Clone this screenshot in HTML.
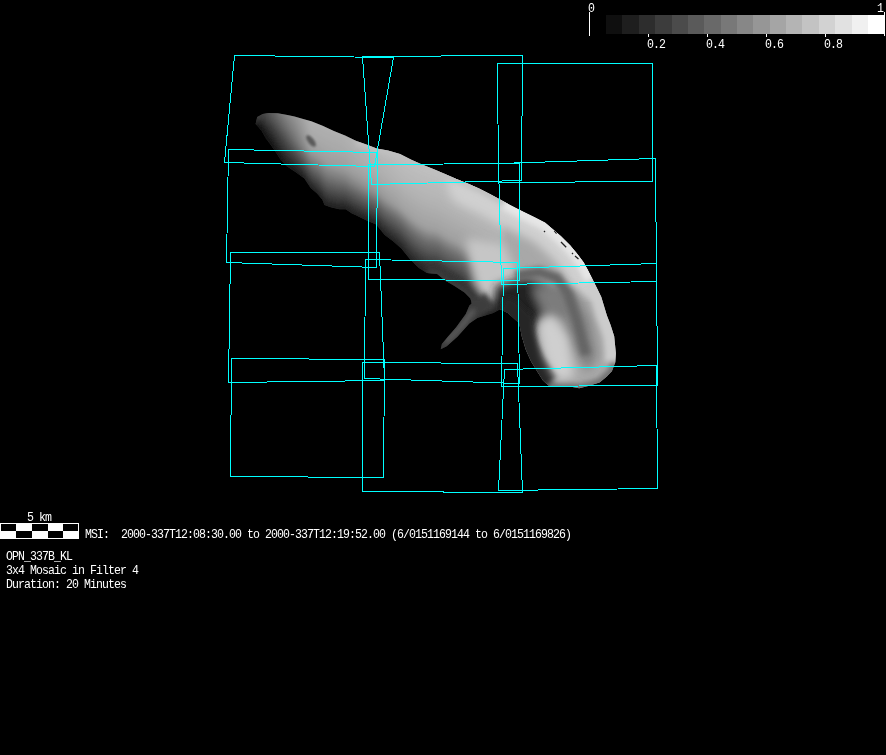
<!DOCTYPE html>
<html><head><meta charset="utf-8">
<style>
html,body{margin:0;padding:0;background:#000;width:886px;height:755px;overflow:hidden}
#root{position:relative;width:886px;height:755px;background:#000}
svg{position:absolute;left:0;top:0}
.t{position:absolute;font-family:"Liberation Mono",monospace;color:#fff;white-space:pre;transform-origin:0 0;line-height:1;font-size:13.6px;letter-spacing:-1.1px;transform:scale(0.85,1)}
</style></head><body><div id="root">
<svg width="886" height="755" viewBox="0 0 886 755">
<g id="bar" shape-rendering="crispEdges">
<rect x="606" y="15" width="16" height="19" fill="rgb(15,15,15)"/>
<rect x="622" y="15" width="17" height="19" fill="rgb(30,30,30)"/>
<rect x="639" y="15" width="16" height="19" fill="rgb(45,45,45)"/>
<rect x="655" y="15" width="17" height="19" fill="rgb(60,60,60)"/>
<rect x="672" y="15" width="16" height="19" fill="rgb(75,75,75)"/>
<rect x="688" y="15" width="16" height="19" fill="rgb(90,90,90)"/>
<rect x="704" y="15" width="17" height="19" fill="rgb(105,105,105)"/>
<rect x="721" y="15" width="16" height="19" fill="rgb(120,120,120)"/>
<rect x="737" y="15" width="16" height="19" fill="rgb(135,135,135)"/>
<rect x="753" y="15" width="17" height="19" fill="rgb(150,150,150)"/>
<rect x="770" y="15" width="16" height="19" fill="rgb(165,165,165)"/>
<rect x="786" y="15" width="16" height="19" fill="rgb(180,180,180)"/>
<rect x="802" y="15" width="17" height="19" fill="rgb(195,195,195)"/>
<rect x="819" y="15" width="16" height="19" fill="rgb(210,210,210)"/>
<rect x="835" y="15" width="17" height="19" fill="rgb(225,225,225)"/>
<rect x="852" y="15" width="16" height="19" fill="rgb(240,240,240)"/>
<rect x="868" y="15" width="16" height="19" fill="rgb(255,255,255)"/>
<rect x="589" y="12" width="1" height="24" fill="#fff"/>
<rect x="884" y="12" width="1" height="24" fill="#fff"/>
<rect x="648" y="34" width="1" height="3" fill="#fff"/>
<rect x="707" y="34" width="1" height="3" fill="#fff"/>
<rect x="766" y="34" width="1" height="3" fill="#fff"/>
<rect x="825" y="34" width="1" height="3" fill="#fff"/>
<rect x="0" y="523" width="79" height="16" fill="#fff"/>
<rect x="1" y="524" width="15" height="7" fill="#000"/>
<rect x="16" y="531" width="16" height="7" fill="#000"/>
<rect x="32" y="524" width="16" height="7" fill="#000"/>
<rect x="48" y="531" width="15" height="7" fill="#000"/>
<rect x="63" y="524" width="15" height="7" fill="#000"/>
</g>
<!--AST--><defs>
<linearGradient id="s248" gradientUnits="userSpaceOnUse" x1="0" y1="114.0" x2="0" y2="130.0"><stop offset="0.00" stop-color="rgb(66,66,66)"/><stop offset="0.25" stop-color="rgb(54,54,54)"/><stop offset="0.50" stop-color="rgb(38,38,38)"/><stop offset="0.75" stop-color="rgb(24,24,24)"/><stop offset="1.00" stop-color="rgb(10,10,10)"/></linearGradient>
<linearGradient id="s252" gradientUnits="userSpaceOnUse" x1="0" y1="114.0" x2="0" y2="130.0"><stop offset="0.00" stop-color="rgb(66,66,66)"/><stop offset="0.25" stop-color="rgb(54,54,54)"/><stop offset="0.50" stop-color="rgb(38,38,38)"/><stop offset="0.75" stop-color="rgb(24,24,24)"/><stop offset="1.00" stop-color="rgb(10,10,10)"/></linearGradient>
<linearGradient id="s256" gradientUnits="userSpaceOnUse" x1="0" y1="116.6" x2="0" y2="126.5"><stop offset="0.00" stop-color="rgb(66,66,66)"/><stop offset="0.25" stop-color="rgb(54,54,54)"/><stop offset="0.50" stop-color="rgb(38,38,38)"/><stop offset="0.75" stop-color="rgb(24,24,24)"/><stop offset="1.00" stop-color="rgb(10,10,10)"/></linearGradient>
<linearGradient id="s260" gradientUnits="userSpaceOnUse" x1="0" y1="114.5" x2="0" y2="131.4"><stop offset="0.00" stop-color="rgb(66,66,66)"/><stop offset="0.25" stop-color="rgb(54,54,54)"/><stop offset="0.50" stop-color="rgb(38,38,38)"/><stop offset="0.75" stop-color="rgb(24,24,24)"/><stop offset="1.00" stop-color="rgb(10,10,10)"/></linearGradient>
<linearGradient id="s264" gradientUnits="userSpaceOnUse" x1="0" y1="113.5" x2="0" y2="138.5"><stop offset="0.00" stop-color="rgb(77,77,77)"/><stop offset="0.25" stop-color="rgb(63,63,63)"/><stop offset="0.50" stop-color="rgb(44,44,44)"/><stop offset="0.75" stop-color="rgb(28,28,28)"/><stop offset="1.00" stop-color="rgb(11,11,11)"/></linearGradient>
<linearGradient id="s268" gradientUnits="userSpaceOnUse" x1="0" y1="113.1" x2="0" y2="143.8"><stop offset="0.00" stop-color="rgb(88,88,88)"/><stop offset="0.25" stop-color="rgb(72,72,72)"/><stop offset="0.50" stop-color="rgb(51,51,51)"/><stop offset="0.75" stop-color="rgb(32,32,32)"/><stop offset="1.00" stop-color="rgb(13,13,13)"/></linearGradient>
<linearGradient id="s272" gradientUnits="userSpaceOnUse" x1="0" y1="113.2" x2="0" y2="149.5"><stop offset="0.00" stop-color="rgb(100,100,100)"/><stop offset="0.25" stop-color="rgb(82,82,82)"/><stop offset="0.50" stop-color="rgb(57,57,57)"/><stop offset="0.75" stop-color="rgb(36,36,36)"/><stop offset="1.00" stop-color="rgb(15,15,15)"/></linearGradient>
<linearGradient id="s276" gradientUnits="userSpaceOnUse" x1="0" y1="113.3" x2="0" y2="155.5"><stop offset="0.00" stop-color="rgb(111,111,111)"/><stop offset="0.25" stop-color="rgb(91,91,91)"/><stop offset="0.50" stop-color="rgb(64,64,64)"/><stop offset="0.75" stop-color="rgb(40,40,40)"/><stop offset="1.00" stop-color="rgb(16,16,16)"/></linearGradient>
<linearGradient id="s280" gradientUnits="userSpaceOnUse" x1="0" y1="114.0" x2="0" y2="161.0"><stop offset="0.00" stop-color="rgb(123,123,123)"/><stop offset="0.25" stop-color="rgb(100,100,100)"/><stop offset="0.50" stop-color="rgb(71,71,71)"/><stop offset="0.75" stop-color="rgb(44,44,44)"/><stop offset="1.00" stop-color="rgb(18,18,18)"/></linearGradient>
<linearGradient id="s284" gradientUnits="userSpaceOnUse" x1="0" y1="114.7" x2="0" y2="165.5"><stop offset="0.00" stop-color="rgb(133,133,133)"/><stop offset="0.25" stop-color="rgb(110,110,110)"/><stop offset="0.45" stop-color="rgb(85,85,85)"/><stop offset="0.50" stop-color="rgb(78,78,78)"/><stop offset="0.58" stop-color="rgb(69,69,69)"/><stop offset="0.70" stop-color="rgb(55,55,55)"/><stop offset="0.75" stop-color="rgb(49,49,49)"/><stop offset="0.80" stop-color="rgb(43,43,43)"/><stop offset="0.90" stop-color="rgb(32,32,32)"/><stop offset="1.00" stop-color="rgb(20,20,20)"/></linearGradient>
<linearGradient id="s288" gradientUnits="userSpaceOnUse" x1="0" y1="115.5" x2="0" y2="168.3"><stop offset="0.00" stop-color="rgb(140,140,140)"/><stop offset="0.25" stop-color="rgb(120,120,120)"/><stop offset="0.45" stop-color="rgb(97,97,97)"/><stop offset="0.50" stop-color="rgb(89,89,89)"/><stop offset="0.58" stop-color="rgb(79,79,79)"/><stop offset="0.70" stop-color="rgb(62,62,62)"/><stop offset="0.75" stop-color="rgb(56,56,56)"/><stop offset="0.80" stop-color="rgb(49,49,49)"/><stop offset="0.90" stop-color="rgb(35,35,35)"/><stop offset="1.00" stop-color="rgb(21,21,21)"/></linearGradient>
<linearGradient id="s292" gradientUnits="userSpaceOnUse" x1="0" y1="116.4" x2="0" y2="170.9"><stop offset="0.00" stop-color="rgb(147,147,147)"/><stop offset="0.25" stop-color="rgb(129,129,129)"/><stop offset="0.45" stop-color="rgb(108,108,108)"/><stop offset="0.50" stop-color="rgb(100,100,100)"/><stop offset="0.58" stop-color="rgb(88,88,88)"/><stop offset="0.70" stop-color="rgb(70,70,70)"/><stop offset="0.75" stop-color="rgb(62,62,62)"/><stop offset="0.80" stop-color="rgb(54,54,54)"/><stop offset="0.90" stop-color="rgb(38,38,38)"/><stop offset="1.00" stop-color="rgb(22,22,22)"/></linearGradient>
<linearGradient id="s296" gradientUnits="userSpaceOnUse" x1="0" y1="117.5" x2="0" y2="173.8"><stop offset="0.00" stop-color="rgb(154,154,154)"/><stop offset="0.25" stop-color="rgb(139,139,139)"/><stop offset="0.45" stop-color="rgb(120,120,120)"/><stop offset="0.50" stop-color="rgb(112,112,112)"/><stop offset="0.58" stop-color="rgb(98,98,98)"/><stop offset="0.70" stop-color="rgb(77,77,77)"/><stop offset="0.75" stop-color="rgb(68,68,68)"/><stop offset="0.80" stop-color="rgb(59,59,59)"/><stop offset="0.90" stop-color="rgb(42,42,42)"/><stop offset="1.00" stop-color="rgb(24,24,24)"/></linearGradient>
<linearGradient id="s300" gradientUnits="userSpaceOnUse" x1="0" y1="118.7" x2="0" y2="176.8"><stop offset="0.00" stop-color="rgb(161,161,161)"/><stop offset="0.25" stop-color="rgb(148,148,148)"/><stop offset="0.45" stop-color="rgb(132,132,132)"/><stop offset="0.50" stop-color="rgb(123,123,123)"/><stop offset="0.58" stop-color="rgb(108,108,108)"/><stop offset="0.70" stop-color="rgb(85,85,85)"/><stop offset="0.75" stop-color="rgb(75,75,75)"/><stop offset="0.80" stop-color="rgb(65,65,65)"/><stop offset="0.90" stop-color="rgb(45,45,45)"/><stop offset="1.00" stop-color="rgb(25,25,25)"/></linearGradient>
<linearGradient id="s304" gradientUnits="userSpaceOnUse" x1="0" y1="119.8" x2="0" y2="181.0"><stop offset="0.00" stop-color="rgb(168,168,168)"/><stop offset="0.25" stop-color="rgb(158,158,158)"/><stop offset="0.45" stop-color="rgb(144,144,144)"/><stop offset="0.50" stop-color="rgb(134,134,134)"/><stop offset="0.58" stop-color="rgb(118,118,118)"/><stop offset="0.70" stop-color="rgb(92,92,92)"/><stop offset="0.75" stop-color="rgb(81,81,81)"/><stop offset="0.80" stop-color="rgb(70,70,70)"/><stop offset="0.90" stop-color="rgb(48,48,48)"/><stop offset="1.00" stop-color="rgb(26,26,26)"/></linearGradient>
<linearGradient id="s308" gradientUnits="userSpaceOnUse" x1="0" y1="120.9" x2="0" y2="187.0"><stop offset="0.00" stop-color="rgb(176,176,176)"/><stop offset="0.25" stop-color="rgb(168,168,168)"/><stop offset="0.45" stop-color="rgb(156,156,156)"/><stop offset="0.58" stop-color="rgb(128,128,128)"/><stop offset="0.70" stop-color="rgb(100,100,100)"/><stop offset="0.80" stop-color="rgb(76,76,76)"/><stop offset="0.90" stop-color="rgb(52,52,52)"/><stop offset="1.00" stop-color="rgb(28,28,28)"/></linearGradient>
<linearGradient id="s312" gradientUnits="userSpaceOnUse" x1="0" y1="122.4" x2="0" y2="190.8"><stop offset="0.00" stop-color="rgb(176,176,176)"/><stop offset="0.25" stop-color="rgb(168,168,168)"/><stop offset="0.45" stop-color="rgb(156,156,156)"/><stop offset="0.58" stop-color="rgb(128,128,128)"/><stop offset="0.70" stop-color="rgb(100,100,100)"/><stop offset="0.80" stop-color="rgb(76,76,76)"/><stop offset="0.90" stop-color="rgb(52,52,52)"/><stop offset="1.00" stop-color="rgb(28,28,28)"/></linearGradient>
<linearGradient id="s316" gradientUnits="userSpaceOnUse" x1="0" y1="124.0" x2="0" y2="194.5"><stop offset="0.00" stop-color="rgb(176,176,176)"/><stop offset="0.25" stop-color="rgb(168,168,168)"/><stop offset="0.45" stop-color="rgb(156,156,156)"/><stop offset="0.58" stop-color="rgb(128,128,128)"/><stop offset="0.70" stop-color="rgb(100,100,100)"/><stop offset="0.80" stop-color="rgb(76,76,76)"/><stop offset="0.90" stop-color="rgb(52,52,52)"/><stop offset="1.00" stop-color="rgb(28,28,28)"/></linearGradient>
<linearGradient id="s320" gradientUnits="userSpaceOnUse" x1="0" y1="125.6" x2="0" y2="199.3"><stop offset="0.00" stop-color="rgb(176,176,176)"/><stop offset="0.25" stop-color="rgb(168,168,168)"/><stop offset="0.45" stop-color="rgb(156,156,156)"/><stop offset="0.58" stop-color="rgb(128,128,128)"/><stop offset="0.70" stop-color="rgb(100,100,100)"/><stop offset="0.80" stop-color="rgb(76,76,76)"/><stop offset="0.90" stop-color="rgb(52,52,52)"/><stop offset="1.00" stop-color="rgb(28,28,28)"/></linearGradient>
<linearGradient id="s324" gradientUnits="userSpaceOnUse" x1="0" y1="127.3" x2="0" y2="205.6"><stop offset="0.00" stop-color="rgb(176,176,176)"/><stop offset="0.25" stop-color="rgb(168,168,168)"/><stop offset="0.45" stop-color="rgb(156,156,156)"/><stop offset="0.58" stop-color="rgb(128,128,128)"/><stop offset="0.70" stop-color="rgb(100,100,100)"/><stop offset="0.80" stop-color="rgb(76,76,76)"/><stop offset="0.90" stop-color="rgb(52,52,52)"/><stop offset="1.00" stop-color="rgb(28,28,28)"/></linearGradient>
<linearGradient id="s328" gradientUnits="userSpaceOnUse" x1="0" y1="129.1" x2="0" y2="206.9"><stop offset="0.00" stop-color="rgb(176,176,176)"/><stop offset="0.25" stop-color="rgb(168,168,168)"/><stop offset="0.45" stop-color="rgb(156,156,156)"/><stop offset="0.58" stop-color="rgb(128,128,128)"/><stop offset="0.70" stop-color="rgb(100,100,100)"/><stop offset="0.80" stop-color="rgb(76,76,76)"/><stop offset="0.90" stop-color="rgb(52,52,52)"/><stop offset="1.00" stop-color="rgb(28,28,28)"/></linearGradient>
<linearGradient id="s332" gradientUnits="userSpaceOnUse" x1="0" y1="130.9" x2="0" y2="208.0"><stop offset="0.00" stop-color="rgb(176,176,176)"/><stop offset="0.25" stop-color="rgb(168,168,168)"/><stop offset="0.45" stop-color="rgb(156,156,156)"/><stop offset="0.58" stop-color="rgb(128,128,128)"/><stop offset="0.70" stop-color="rgb(100,100,100)"/><stop offset="0.80" stop-color="rgb(76,76,76)"/><stop offset="0.90" stop-color="rgb(52,52,52)"/><stop offset="1.00" stop-color="rgb(28,28,28)"/></linearGradient>
<linearGradient id="s336" gradientUnits="userSpaceOnUse" x1="0" y1="132.5" x2="0" y2="209.0"><stop offset="0.00" stop-color="rgb(176,176,176)"/><stop offset="0.25" stop-color="rgb(168,168,168)"/><stop offset="0.45" stop-color="rgb(156,156,156)"/><stop offset="0.58" stop-color="rgb(128,128,128)"/><stop offset="0.70" stop-color="rgb(100,100,100)"/><stop offset="0.80" stop-color="rgb(76,76,76)"/><stop offset="0.90" stop-color="rgb(52,52,52)"/><stop offset="1.00" stop-color="rgb(28,28,28)"/></linearGradient>
<linearGradient id="s340" gradientUnits="userSpaceOnUse" x1="0" y1="134.2" x2="0" y2="209.3"><stop offset="0.00" stop-color="rgb(176,176,176)"/><stop offset="0.25" stop-color="rgb(168,168,168)"/><stop offset="0.30" stop-color="rgb(165,165,165)"/><stop offset="0.45" stop-color="rgb(156,156,156)"/><stop offset="0.58" stop-color="rgb(129,129,129)"/><stop offset="0.70" stop-color="rgb(100,100,100)"/><stop offset="0.80" stop-color="rgb(76,76,76)"/><stop offset="0.90" stop-color="rgb(52,52,52)"/><stop offset="1.00" stop-color="rgb(28,28,28)"/></linearGradient>
<linearGradient id="s344" gradientUnits="userSpaceOnUse" x1="0" y1="135.8" x2="0" y2="209.5"><stop offset="0.00" stop-color="rgb(177,177,177)"/><stop offset="0.25" stop-color="rgb(169,169,169)"/><stop offset="0.30" stop-color="rgb(166,166,166)"/><stop offset="0.45" stop-color="rgb(157,157,157)"/><stop offset="0.58" stop-color="rgb(131,131,131)"/><stop offset="0.70" stop-color="rgb(101,101,101)"/><stop offset="0.80" stop-color="rgb(77,77,77)"/><stop offset="0.90" stop-color="rgb(52,52,52)"/><stop offset="1.00" stop-color="rgb(28,28,28)"/></linearGradient>
<linearGradient id="s348" gradientUnits="userSpaceOnUse" x1="0" y1="137.8" x2="0" y2="212.2"><stop offset="0.00" stop-color="rgb(178,178,178)"/><stop offset="0.25" stop-color="rgb(170,170,170)"/><stop offset="0.30" stop-color="rgb(167,167,167)"/><stop offset="0.45" stop-color="rgb(158,158,158)"/><stop offset="0.58" stop-color="rgb(133,133,133)"/><stop offset="0.70" stop-color="rgb(102,102,102)"/><stop offset="0.80" stop-color="rgb(77,77,77)"/><stop offset="0.90" stop-color="rgb(52,52,52)"/><stop offset="1.00" stop-color="rgb(28,28,28)"/></linearGradient>
<linearGradient id="s352" gradientUnits="userSpaceOnUse" x1="0" y1="139.8" x2="0" y2="214.4"><stop offset="0.00" stop-color="rgb(179,179,179)"/><stop offset="0.25" stop-color="rgb(171,171,171)"/><stop offset="0.30" stop-color="rgb(168,168,168)"/><stop offset="0.45" stop-color="rgb(159,159,159)"/><stop offset="0.58" stop-color="rgb(135,135,135)"/><stop offset="0.70" stop-color="rgb(102,102,102)"/><stop offset="0.80" stop-color="rgb(78,78,78)"/><stop offset="0.90" stop-color="rgb(52,52,52)"/><stop offset="1.00" stop-color="rgb(28,28,28)"/></linearGradient>
<linearGradient id="s356" gradientUnits="userSpaceOnUse" x1="0" y1="141.6" x2="0" y2="216.3"><stop offset="0.00" stop-color="rgb(180,180,180)"/><stop offset="0.25" stop-color="rgb(172,172,172)"/><stop offset="0.30" stop-color="rgb(169,169,169)"/><stop offset="0.45" stop-color="rgb(159,159,159)"/><stop offset="0.58" stop-color="rgb(137,137,137)"/><stop offset="0.70" stop-color="rgb(103,103,103)"/><stop offset="0.80" stop-color="rgb(79,79,79)"/><stop offset="0.90" stop-color="rgb(53,53,53)"/><stop offset="1.00" stop-color="rgb(29,29,29)"/></linearGradient>
<linearGradient id="s360" gradientUnits="userSpaceOnUse" x1="0" y1="143.0" x2="0" y2="218.3"><stop offset="0.00" stop-color="rgb(181,181,181)"/><stop offset="0.25" stop-color="rgb(173,173,173)"/><stop offset="0.30" stop-color="rgb(170,170,170)"/><stop offset="0.45" stop-color="rgb(160,160,160)"/><stop offset="0.58" stop-color="rgb(139,139,139)"/><stop offset="0.70" stop-color="rgb(104,104,104)"/><stop offset="0.80" stop-color="rgb(79,79,79)"/><stop offset="0.90" stop-color="rgb(53,53,53)"/><stop offset="1.00" stop-color="rgb(29,29,29)"/></linearGradient>
<linearGradient id="s364" gradientUnits="userSpaceOnUse" x1="0" y1="144.4" x2="0" y2="220.3"><stop offset="0.00" stop-color="rgb(182,182,182)"/><stop offset="0.25" stop-color="rgb(174,174,174)"/><stop offset="0.30" stop-color="rgb(171,171,171)"/><stop offset="0.45" stop-color="rgb(161,161,161)"/><stop offset="0.58" stop-color="rgb(141,141,141)"/><stop offset="0.70" stop-color="rgb(105,105,105)"/><stop offset="0.80" stop-color="rgb(80,80,80)"/><stop offset="0.90" stop-color="rgb(53,53,53)"/><stop offset="1.00" stop-color="rgb(29,29,29)"/></linearGradient>
<linearGradient id="s368" gradientUnits="userSpaceOnUse" x1="0" y1="145.9" x2="0" y2="221.9"><stop offset="0.00" stop-color="rgb(184,184,184)"/><stop offset="0.25" stop-color="rgb(175,175,175)"/><stop offset="0.30" stop-color="rgb(172,172,172)"/><stop offset="0.45" stop-color="rgb(162,162,162)"/><stop offset="0.58" stop-color="rgb(144,144,144)"/><stop offset="0.70" stop-color="rgb(106,106,106)"/><stop offset="0.80" stop-color="rgb(81,81,81)"/><stop offset="0.90" stop-color="rgb(54,54,54)"/><stop offset="1.00" stop-color="rgb(30,30,30)"/></linearGradient>
<linearGradient id="s372" gradientUnits="userSpaceOnUse" x1="0" y1="147.4" x2="0" y2="223.5"><stop offset="0.00" stop-color="rgb(185,185,185)"/><stop offset="0.25" stop-color="rgb(175,175,175)"/><stop offset="0.30" stop-color="rgb(173,173,173)"/><stop offset="0.45" stop-color="rgb(163,163,163)"/><stop offset="0.58" stop-color="rgb(146,146,146)"/><stop offset="0.70" stop-color="rgb(106,106,106)"/><stop offset="0.80" stop-color="rgb(81,81,81)"/><stop offset="0.90" stop-color="rgb(54,54,54)"/><stop offset="1.00" stop-color="rgb(30,30,30)"/></linearGradient>
<linearGradient id="s376" gradientUnits="userSpaceOnUse" x1="0" y1="148.7" x2="0" y2="226.6"><stop offset="0.00" stop-color="rgb(186,186,186)"/><stop offset="0.25" stop-color="rgb(176,176,176)"/><stop offset="0.30" stop-color="rgb(174,174,174)"/><stop offset="0.45" stop-color="rgb(164,164,164)"/><stop offset="0.58" stop-color="rgb(148,148,148)"/><stop offset="0.70" stop-color="rgb(107,107,107)"/><stop offset="0.80" stop-color="rgb(82,82,82)"/><stop offset="0.90" stop-color="rgb(54,54,54)"/><stop offset="1.00" stop-color="rgb(30,30,30)"/></linearGradient>
<linearGradient id="s380" gradientUnits="userSpaceOnUse" x1="0" y1="149.4" x2="0" y2="231.6"><stop offset="0.00" stop-color="rgb(187,187,187)"/><stop offset="0.25" stop-color="rgb(177,177,177)"/><stop offset="0.30" stop-color="rgb(175,175,175)"/><stop offset="0.45" stop-color="rgb(165,165,165)"/><stop offset="0.58" stop-color="rgb(150,150,150)"/><stop offset="0.70" stop-color="rgb(108,108,108)"/><stop offset="0.80" stop-color="rgb(83,83,83)"/><stop offset="0.90" stop-color="rgb(54,54,54)"/><stop offset="1.00" stop-color="rgb(30,30,30)"/></linearGradient>
<linearGradient id="s384" gradientUnits="userSpaceOnUse" x1="0" y1="150.2" x2="0" y2="236.0"><stop offset="0.00" stop-color="rgb(188,188,188)"/><stop offset="0.25" stop-color="rgb(178,178,178)"/><stop offset="0.30" stop-color="rgb(176,176,176)"/><stop offset="0.45" stop-color="rgb(166,166,166)"/><stop offset="0.58" stop-color="rgb(152,152,152)"/><stop offset="0.70" stop-color="rgb(109,109,109)"/><stop offset="0.80" stop-color="rgb(83,83,83)"/><stop offset="0.90" stop-color="rgb(55,55,55)"/><stop offset="1.00" stop-color="rgb(31,31,31)"/></linearGradient>
<linearGradient id="s388" gradientUnits="userSpaceOnUse" x1="0" y1="151.2" x2="0" y2="239.0"><stop offset="0.00" stop-color="rgb(189,189,189)"/><stop offset="0.25" stop-color="rgb(179,179,179)"/><stop offset="0.30" stop-color="rgb(177,177,177)"/><stop offset="0.45" stop-color="rgb(167,167,167)"/><stop offset="0.58" stop-color="rgb(154,154,154)"/><stop offset="0.70" stop-color="rgb(110,110,110)"/><stop offset="0.80" stop-color="rgb(84,84,84)"/><stop offset="0.90" stop-color="rgb(55,55,55)"/><stop offset="1.00" stop-color="rgb(31,31,31)"/></linearGradient>
<linearGradient id="s392" gradientUnits="userSpaceOnUse" x1="0" y1="152.3" x2="0" y2="242.1"><stop offset="0.00" stop-color="rgb(190,190,190)"/><stop offset="0.25" stop-color="rgb(180,180,180)"/><stop offset="0.30" stop-color="rgb(178,178,178)"/><stop offset="0.45" stop-color="rgb(167,167,167)"/><stop offset="0.58" stop-color="rgb(156,156,156)"/><stop offset="0.70" stop-color="rgb(110,110,110)"/><stop offset="0.80" stop-color="rgb(85,85,85)"/><stop offset="0.90" stop-color="rgb(55,55,55)"/><stop offset="1.00" stop-color="rgb(31,31,31)"/></linearGradient>
<linearGradient id="s396" gradientUnits="userSpaceOnUse" x1="0" y1="153.5" x2="0" y2="245.6"><stop offset="0.00" stop-color="rgb(191,191,191)"/><stop offset="0.25" stop-color="rgb(181,181,181)"/><stop offset="0.30" stop-color="rgb(179,179,179)"/><stop offset="0.45" stop-color="rgb(168,168,168)"/><stop offset="0.58" stop-color="rgb(158,158,158)"/><stop offset="0.70" stop-color="rgb(111,111,111)"/><stop offset="0.80" stop-color="rgb(85,85,85)"/><stop offset="0.90" stop-color="rgb(55,55,55)"/><stop offset="1.00" stop-color="rgb(31,31,31)"/></linearGradient>
<linearGradient id="s400" gradientUnits="userSpaceOnUse" x1="0" y1="155.1" x2="0" y2="249.2"><stop offset="0.00" stop-color="rgb(192,192,192)"/><stop offset="0.30" stop-color="rgb(180,180,180)"/><stop offset="0.58" stop-color="rgb(160,160,160)"/><stop offset="0.70" stop-color="rgb(112,112,112)"/><stop offset="0.80" stop-color="rgb(86,86,86)"/><stop offset="0.90" stop-color="rgb(56,56,56)"/><stop offset="1.00" stop-color="rgb(32,32,32)"/></linearGradient>
<linearGradient id="s404" gradientUnits="userSpaceOnUse" x1="0" y1="157.1" x2="0" y2="254.2"><stop offset="0.00" stop-color="rgb(192,192,192)"/><stop offset="0.30" stop-color="rgb(180,180,180)"/><stop offset="0.58" stop-color="rgb(160,160,160)"/><stop offset="0.70" stop-color="rgb(112,112,112)"/><stop offset="0.80" stop-color="rgb(86,86,86)"/><stop offset="0.90" stop-color="rgb(56,56,56)"/><stop offset="1.00" stop-color="rgb(32,32,32)"/></linearGradient>
<linearGradient id="s408" gradientUnits="userSpaceOnUse" x1="0" y1="159.1" x2="0" y2="259.2"><stop offset="0.00" stop-color="rgb(192,192,192)"/><stop offset="0.30" stop-color="rgb(180,180,180)"/><stop offset="0.58" stop-color="rgb(160,160,160)"/><stop offset="0.70" stop-color="rgb(112,112,112)"/><stop offset="0.80" stop-color="rgb(86,86,86)"/><stop offset="0.90" stop-color="rgb(56,56,56)"/><stop offset="1.00" stop-color="rgb(32,32,32)"/></linearGradient>
<linearGradient id="s412" gradientUnits="userSpaceOnUse" x1="0" y1="161.0" x2="0" y2="263.2"><stop offset="0.00" stop-color="rgb(192,192,192)"/><stop offset="0.30" stop-color="rgb(180,180,180)"/><stop offset="0.58" stop-color="rgb(160,160,160)"/><stop offset="0.70" stop-color="rgb(112,112,112)"/><stop offset="0.80" stop-color="rgb(86,86,86)"/><stop offset="0.90" stop-color="rgb(56,56,56)"/><stop offset="1.00" stop-color="rgb(32,32,32)"/></linearGradient>
<linearGradient id="s416" gradientUnits="userSpaceOnUse" x1="0" y1="162.8" x2="0" y2="267.2"><stop offset="0.00" stop-color="rgb(192,192,192)"/><stop offset="0.30" stop-color="rgb(180,180,180)"/><stop offset="0.58" stop-color="rgb(160,160,160)"/><stop offset="0.70" stop-color="rgb(112,112,112)"/><stop offset="0.80" stop-color="rgb(86,86,86)"/><stop offset="0.90" stop-color="rgb(56,56,56)"/><stop offset="1.00" stop-color="rgb(32,32,32)"/></linearGradient>
<linearGradient id="s420" gradientUnits="userSpaceOnUse" x1="0" y1="164.5" x2="0" y2="269.9"><stop offset="0.00" stop-color="rgb(192,192,192)"/><stop offset="0.30" stop-color="rgb(180,180,180)"/><stop offset="0.58" stop-color="rgb(160,160,160)"/><stop offset="0.70" stop-color="rgb(112,112,112)"/><stop offset="0.80" stop-color="rgb(86,86,86)"/><stop offset="0.90" stop-color="rgb(56,56,56)"/><stop offset="1.00" stop-color="rgb(32,32,32)"/></linearGradient>
<linearGradient id="s424" gradientUnits="userSpaceOnUse" x1="0" y1="166.2" x2="0" y2="272.5"><stop offset="0.00" stop-color="rgb(192,192,192)"/><stop offset="0.30" stop-color="rgb(180,180,180)"/><stop offset="0.58" stop-color="rgb(160,160,160)"/><stop offset="0.70" stop-color="rgb(112,112,112)"/><stop offset="0.80" stop-color="rgb(86,86,86)"/><stop offset="0.90" stop-color="rgb(56,56,56)"/><stop offset="1.00" stop-color="rgb(32,32,32)"/></linearGradient>
<linearGradient id="s428" gradientUnits="userSpaceOnUse" x1="0" y1="167.7" x2="0" y2="273.4"><stop offset="0.00" stop-color="rgb(192,192,192)"/><stop offset="0.30" stop-color="rgb(180,180,180)"/><stop offset="0.58" stop-color="rgb(160,160,160)"/><stop offset="0.70" stop-color="rgb(112,112,112)"/><stop offset="0.80" stop-color="rgb(86,86,86)"/><stop offset="0.90" stop-color="rgb(56,56,56)"/><stop offset="1.00" stop-color="rgb(32,32,32)"/></linearGradient>
<linearGradient id="s432" gradientUnits="userSpaceOnUse" x1="0" y1="169.3" x2="0" y2="273.7"><stop offset="0.00" stop-color="rgb(192,192,192)"/><stop offset="0.30" stop-color="rgb(180,180,180)"/><stop offset="0.58" stop-color="rgb(160,160,160)"/><stop offset="0.70" stop-color="rgb(112,112,112)"/><stop offset="0.80" stop-color="rgb(86,86,86)"/><stop offset="0.90" stop-color="rgb(56,56,56)"/><stop offset="1.00" stop-color="rgb(32,32,32)"/></linearGradient>
<linearGradient id="s436" gradientUnits="userSpaceOnUse" x1="0" y1="171.0" x2="0" y2="274.6"><stop offset="0.00" stop-color="rgb(192,192,192)"/><stop offset="0.30" stop-color="rgb(180,180,180)"/><stop offset="0.58" stop-color="rgb(160,160,160)"/><stop offset="0.70" stop-color="rgb(112,112,112)"/><stop offset="0.80" stop-color="rgb(86,86,86)"/><stop offset="0.90" stop-color="rgb(56,56,56)"/><stop offset="1.00" stop-color="rgb(32,32,32)"/></linearGradient>
<linearGradient id="s440" gradientUnits="userSpaceOnUse" x1="0" y1="172.6" x2="0" y2="277.9"><stop offset="0.00" stop-color="rgb(192,192,192)"/><stop offset="0.30" stop-color="rgb(180,180,180)"/><stop offset="0.58" stop-color="rgb(160,160,160)"/><stop offset="0.70" stop-color="rgb(112,112,112)"/><stop offset="0.80" stop-color="rgb(86,86,86)"/><stop offset="0.90" stop-color="rgb(56,56,56)"/><stop offset="1.00" stop-color="rgb(32,32,32)"/></linearGradient>
<linearGradient id="s444" gradientUnits="userSpaceOnUse" x1="0" y1="174.3" x2="0" y2="281.0"><stop offset="0.00" stop-color="rgb(192,192,192)"/><stop offset="0.30" stop-color="rgb(180,180,180)"/><stop offset="0.58" stop-color="rgb(160,160,160)"/><stop offset="0.70" stop-color="rgb(112,112,112)"/><stop offset="0.80" stop-color="rgb(86,86,86)"/><stop offset="0.90" stop-color="rgb(56,56,56)"/><stop offset="1.00" stop-color="rgb(32,32,32)"/></linearGradient>
<linearGradient id="s448" gradientUnits="userSpaceOnUse" x1="0" y1="176.1" x2="0" y2="283.3"><stop offset="0.00" stop-color="rgb(192,192,192)"/><stop offset="0.30" stop-color="rgb(180,180,180)"/><stop offset="0.58" stop-color="rgb(160,160,160)"/><stop offset="0.70" stop-color="rgb(112,112,112)"/><stop offset="0.80" stop-color="rgb(86,86,86)"/><stop offset="0.90" stop-color="rgb(56,56,56)"/><stop offset="1.00" stop-color="rgb(32,32,32)"/></linearGradient>
<linearGradient id="s452" gradientUnits="userSpaceOnUse" x1="0" y1="177.8" x2="0" y2="285.6"><stop offset="0.00" stop-color="rgb(192,192,192)"/><stop offset="0.30" stop-color="rgb(180,180,180)"/><stop offset="0.58" stop-color="rgb(160,160,160)"/><stop offset="0.70" stop-color="rgb(112,112,112)"/><stop offset="0.80" stop-color="rgb(86,86,86)"/><stop offset="0.90" stop-color="rgb(56,56,56)"/><stop offset="1.00" stop-color="rgb(32,32,32)"/></linearGradient>
<linearGradient id="s456" gradientUnits="userSpaceOnUse" x1="0" y1="179.6" x2="0" y2="288.3"><stop offset="0.00" stop-color="rgb(192,192,192)"/><stop offset="0.30" stop-color="rgb(180,180,180)"/><stop offset="0.58" stop-color="rgb(160,160,160)"/><stop offset="0.70" stop-color="rgb(112,112,112)"/><stop offset="0.80" stop-color="rgb(86,86,86)"/><stop offset="0.90" stop-color="rgb(56,56,56)"/><stop offset="1.00" stop-color="rgb(32,32,32)"/></linearGradient>
<linearGradient id="s460" gradientUnits="userSpaceOnUse" x1="0" y1="181.2" x2="0" y2="290.9"><stop offset="0.00" stop-color="rgb(192,192,192)"/><stop offset="0.30" stop-color="rgb(180,180,180)"/><stop offset="0.58" stop-color="rgb(160,160,160)"/><stop offset="0.70" stop-color="rgb(112,112,112)"/><stop offset="0.80" stop-color="rgb(86,86,86)"/><stop offset="0.90" stop-color="rgb(56,56,56)"/><stop offset="1.00" stop-color="rgb(32,32,32)"/></linearGradient>
<linearGradient id="s464" gradientUnits="userSpaceOnUse" x1="0" y1="182.8" x2="0" y2="294.0"><stop offset="0.00" stop-color="rgb(192,192,192)"/><stop offset="0.30" stop-color="rgb(180,180,180)"/><stop offset="0.58" stop-color="rgb(160,160,160)"/><stop offset="0.70" stop-color="rgb(112,112,112)"/><stop offset="0.80" stop-color="rgb(86,86,86)"/><stop offset="0.90" stop-color="rgb(56,56,56)"/><stop offset="1.00" stop-color="rgb(32,32,32)"/></linearGradient>
<linearGradient id="s468" gradientUnits="userSpaceOnUse" x1="0" y1="184.5" x2="0" y2="298.1"><stop offset="0.00" stop-color="rgb(192,192,192)"/><stop offset="0.30" stop-color="rgb(180,180,180)"/><stop offset="0.58" stop-color="rgb(160,160,160)"/><stop offset="0.70" stop-color="rgb(112,112,112)"/><stop offset="0.80" stop-color="rgb(86,86,86)"/><stop offset="0.90" stop-color="rgb(56,56,56)"/><stop offset="1.00" stop-color="rgb(32,32,32)"/></linearGradient>
<linearGradient id="s472" gradientUnits="userSpaceOnUse" x1="0" y1="186.3" x2="0" y2="304.8"><stop offset="0.00" stop-color="rgb(192,192,192)"/><stop offset="0.30" stop-color="rgb(180,180,180)"/><stop offset="0.58" stop-color="rgb(160,160,160)"/><stop offset="0.70" stop-color="rgb(112,112,112)"/><stop offset="0.80" stop-color="rgb(86,86,86)"/><stop offset="0.90" stop-color="rgb(56,56,56)"/><stop offset="1.00" stop-color="rgb(32,32,32)"/></linearGradient>
<linearGradient id="s476" gradientUnits="userSpaceOnUse" x1="0" y1="188.1" x2="0" y2="307.2"><stop offset="0.00" stop-color="rgb(192,192,192)"/><stop offset="0.30" stop-color="rgb(180,180,180)"/><stop offset="0.58" stop-color="rgb(160,160,160)"/><stop offset="0.70" stop-color="rgb(112,112,112)"/><stop offset="0.80" stop-color="rgb(86,86,86)"/><stop offset="0.90" stop-color="rgb(56,56,56)"/><stop offset="1.00" stop-color="rgb(32,32,32)"/></linearGradient>
<linearGradient id="s480" gradientUnits="userSpaceOnUse" x1="0" y1="190.0" x2="0" y2="309.6"><stop offset="0.00" stop-color="rgb(192,192,192)"/><stop offset="0.30" stop-color="rgb(180,180,180)"/><stop offset="0.58" stop-color="rgb(160,160,160)"/><stop offset="0.70" stop-color="rgb(112,112,112)"/><stop offset="0.80" stop-color="rgb(86,86,86)"/><stop offset="0.90" stop-color="rgb(56,56,56)"/><stop offset="1.00" stop-color="rgb(32,32,32)"/></linearGradient>
<linearGradient id="s484" gradientUnits="userSpaceOnUse" x1="0" y1="192.0" x2="0" y2="312.0"><stop offset="0.00" stop-color="rgb(192,192,192)"/><stop offset="0.30" stop-color="rgb(180,180,180)"/><stop offset="0.58" stop-color="rgb(160,160,160)"/><stop offset="0.70" stop-color="rgb(112,112,112)"/><stop offset="0.80" stop-color="rgb(86,86,86)"/><stop offset="0.90" stop-color="rgb(56,56,56)"/><stop offset="1.00" stop-color="rgb(32,32,32)"/></linearGradient>
<linearGradient id="s488" gradientUnits="userSpaceOnUse" x1="0" y1="194.0" x2="0" y2="312.6"><stop offset="0.00" stop-color="rgb(192,192,192)"/><stop offset="0.30" stop-color="rgb(180,180,180)"/><stop offset="0.58" stop-color="rgb(160,160,160)"/><stop offset="0.70" stop-color="rgb(112,112,112)"/><stop offset="0.80" stop-color="rgb(86,86,86)"/><stop offset="0.90" stop-color="rgb(56,56,56)"/><stop offset="1.00" stop-color="rgb(32,32,32)"/></linearGradient>
<linearGradient id="s492" gradientUnits="userSpaceOnUse" x1="0" y1="196.3" x2="0" y2="313.1"><stop offset="0.00" stop-color="rgb(192,192,192)"/><stop offset="0.30" stop-color="rgb(180,180,180)"/><stop offset="0.58" stop-color="rgb(160,160,160)"/><stop offset="0.70" stop-color="rgb(112,112,112)"/><stop offset="0.80" stop-color="rgb(86,86,86)"/><stop offset="0.90" stop-color="rgb(56,56,56)"/><stop offset="1.00" stop-color="rgb(32,32,32)"/></linearGradient>
<linearGradient id="s496" gradientUnits="userSpaceOnUse" x1="0" y1="198.5" x2="0" y2="313.7"><stop offset="0.00" stop-color="rgb(192,192,192)"/><stop offset="0.30" stop-color="rgb(180,180,180)"/><stop offset="0.58" stop-color="rgb(160,160,160)"/><stop offset="0.70" stop-color="rgb(112,112,112)"/><stop offset="0.80" stop-color="rgb(86,86,86)"/><stop offset="0.90" stop-color="rgb(56,56,56)"/><stop offset="1.00" stop-color="rgb(32,32,32)"/></linearGradient>
<linearGradient id="s500" gradientUnits="userSpaceOnUse" x1="0" y1="200.7" x2="0" y2="314.0"><stop offset="0.00" stop-color="rgb(192,192,192)"/><stop offset="0.30" stop-color="rgb(180,180,180)"/><stop offset="0.58" stop-color="rgb(160,160,160)"/><stop offset="0.70" stop-color="rgb(112,112,112)"/><stop offset="0.80" stop-color="rgb(86,86,86)"/><stop offset="0.90" stop-color="rgb(56,56,56)"/><stop offset="1.00" stop-color="rgb(32,32,32)"/></linearGradient>
<clipPath id="sil"><polygon points="255.6,124.0 257.2,117.0 262.7,114.1 268.3,113.0 277.8,113.3 287.4,114.9 294.5,116.5 304.0,119.3 311.3,121.3 322.6,125.8 333.9,130.9 345.1,135.4 356.4,141.0 367.7,145.0 376.7,148.4 388.0,150.6 400.0,154.1 411.3,159.8 422.6,164.8 433.9,169.3 445.1,173.9 456.4,178.9 467.7,183.5 479.0,188.5 490.3,194.2 500.0,199.6 511.3,205.8 522.6,211.4 533.9,217.1 545.1,222.7 551.9,228.4 560.9,236.3 570.0,245.3 576.7,253.2 583.5,262.2 587.4,269.3 592.1,278.5 596.7,287.8 601.3,297.1 604.1,306.3 606.9,315.6 610.6,324.9 614.2,336.3 615.9,353.2 615.3,362.2 611.9,371.3 606.3,376.9 599.5,382.6 588.2,386.0 579.2,388.2 572.4,387.0 558.9,386.5 548.4,385.5 543.0,380.5 537.7,372.2 531.1,361.6 525.8,349.7 521.8,336.4 519.2,323.2 508.0,313.0 500.0,309.3 493.2,312.9 486.0,315.3 477.7,317.7 469.3,323.6 457.4,336.7 446.7,346.3 440.7,349.3 441.9,343.9 447.9,336.7 456.2,327.2 465.8,314.1 469.3,305.8 471.7,303.4 470.5,298.6 464.6,292.6 453.8,285.5 445.5,280.7 437.2,274.0 427.0,273.1 418.6,267.8 410.1,259.3 401.6,248.7 393.1,241.3 384.7,235.0 376.2,224.4 365.6,220.1 355.0,214.8 352.0,213.6 345.7,209.3 339.3,209.3 330.8,207.2 324.5,205.1 322.4,199.8 317.1,193.4 310.7,188.1 304.4,178.6 295.9,172.2 286.4,165.9 280.2,159.0 276.2,152.7 270.7,144.7 265.9,138.4 261.9,131.2 258.0,126.5"/></clipPath>
<filter id="bl" x="-20%" y="-20%" width="140%" height="140%"><feGaussianBlur stdDeviation="2.5"/></filter>
<filter id="bl1" x="-50%" y="-50%" width="200%" height="200%"><feGaussianBlur stdDeviation="1.2"/></filter>
<filter id="bl5" x="-30%" y="-30%" width="160%" height="160%"><feGaussianBlur stdDeviation="5"/></filter>
<filter id="bl8" x="-50%" y="-50%" width="200%" height="200%"><feGaussianBlur stdDeviation="9"/></filter>
</defs>
<g clip-path="url(#sil)">
<rect x="240" y="100" width="260" height="300" fill="#303030"/>
<rect x="500" y="100" width="130" height="300" fill="#a8a8a8"/>
<g filter="url(#bl)">
<rect x="248" y="102.0" width="4.5" height="40.0" fill="url(#s248)"/>
<rect x="252" y="102.0" width="4.5" height="40.0" fill="url(#s252)"/>
<rect x="256" y="104.6" width="4.5" height="33.9" fill="url(#s256)"/>
<rect x="260" y="102.5" width="4.5" height="40.9" fill="url(#s260)"/>
<rect x="264" y="101.5" width="4.5" height="49.1" fill="url(#s264)"/>
<rect x="268" y="101.1" width="4.5" height="54.7" fill="url(#s268)"/>
<rect x="272" y="101.2" width="4.5" height="60.3" fill="url(#s272)"/>
<rect x="276" y="101.3" width="4.5" height="66.2" fill="url(#s276)"/>
<rect x="280" y="102.0" width="4.5" height="71.0" fill="url(#s280)"/>
<rect x="284" y="102.7" width="4.5" height="74.8" fill="url(#s284)"/>
<rect x="288" y="103.5" width="4.5" height="76.8" fill="url(#s288)"/>
<rect x="292" y="104.4" width="4.5" height="78.6" fill="url(#s292)"/>
<rect x="296" y="105.5" width="4.5" height="80.2" fill="url(#s296)"/>
<rect x="300" y="106.7" width="4.5" height="82.1" fill="url(#s300)"/>
<rect x="304" y="107.8" width="4.5" height="85.2" fill="url(#s304)"/>
<rect x="308" y="108.9" width="4.5" height="90.1" fill="url(#s308)"/>
<rect x="312" y="110.4" width="4.5" height="92.5" fill="url(#s312)"/>
<rect x="316" y="112.0" width="4.5" height="94.5" fill="url(#s316)"/>
<rect x="320" y="113.6" width="4.5" height="97.8" fill="url(#s320)"/>
<rect x="324" y="115.3" width="4.5" height="102.3" fill="url(#s324)"/>
<rect x="328" y="117.1" width="4.5" height="101.8" fill="url(#s328)"/>
<rect x="332" y="118.9" width="4.5" height="101.1" fill="url(#s332)"/>
<rect x="336" y="120.5" width="4.5" height="100.4" fill="url(#s336)"/>
<rect x="340" y="122.2" width="4.5" height="99.1" fill="url(#s340)"/>
<rect x="344" y="123.8" width="4.5" height="97.7" fill="url(#s344)"/>
<rect x="348" y="125.8" width="4.5" height="98.4" fill="url(#s348)"/>
<rect x="352" y="127.8" width="4.5" height="98.6" fill="url(#s352)"/>
<rect x="356" y="129.6" width="4.5" height="98.7" fill="url(#s356)"/>
<rect x="360" y="131.0" width="4.5" height="99.3" fill="url(#s360)"/>
<rect x="364" y="132.4" width="4.5" height="99.9" fill="url(#s364)"/>
<rect x="368" y="133.9" width="4.5" height="100.0" fill="url(#s368)"/>
<rect x="372" y="135.4" width="4.5" height="100.1" fill="url(#s372)"/>
<rect x="376" y="136.7" width="4.5" height="102.0" fill="url(#s376)"/>
<rect x="380" y="137.4" width="4.5" height="106.2" fill="url(#s380)"/>
<rect x="384" y="138.2" width="4.5" height="109.8" fill="url(#s384)"/>
<rect x="388" y="139.2" width="4.5" height="111.8" fill="url(#s388)"/>
<rect x="392" y="140.3" width="4.5" height="113.7" fill="url(#s392)"/>
<rect x="396" y="141.5" width="4.5" height="116.0" fill="url(#s396)"/>
<rect x="400" y="143.1" width="4.5" height="118.1" fill="url(#s400)"/>
<rect x="404" y="145.1" width="4.5" height="121.1" fill="url(#s404)"/>
<rect x="408" y="147.1" width="4.5" height="124.0" fill="url(#s408)"/>
<rect x="412" y="149.0" width="4.5" height="126.2" fill="url(#s412)"/>
<rect x="416" y="150.8" width="4.5" height="128.4" fill="url(#s416)"/>
<rect x="420" y="152.5" width="4.5" height="129.4" fill="url(#s420)"/>
<rect x="424" y="154.2" width="4.5" height="130.3" fill="url(#s424)"/>
<rect x="428" y="155.7" width="4.5" height="129.6" fill="url(#s428)"/>
<rect x="432" y="157.3" width="4.5" height="128.4" fill="url(#s432)"/>
<rect x="436" y="159.0" width="4.5" height="127.7" fill="url(#s436)"/>
<rect x="440" y="160.6" width="4.5" height="129.2" fill="url(#s440)"/>
<rect x="444" y="162.3" width="4.5" height="130.7" fill="url(#s444)"/>
<rect x="448" y="164.1" width="4.5" height="131.2" fill="url(#s448)"/>
<rect x="452" y="165.8" width="4.5" height="131.8" fill="url(#s452)"/>
<rect x="456" y="167.6" width="4.5" height="132.7" fill="url(#s456)"/>
<rect x="460" y="169.2" width="4.5" height="133.7" fill="url(#s460)"/>
<rect x="464" y="170.8" width="4.5" height="135.2" fill="url(#s464)"/>
<rect x="468" y="172.5" width="4.5" height="137.6" fill="url(#s468)"/>
<rect x="472" y="174.3" width="4.5" height="142.5" fill="url(#s472)"/>
<rect x="476" y="176.1" width="4.5" height="143.1" fill="url(#s476)"/>
<rect x="480" y="178.0" width="4.5" height="143.6" fill="url(#s480)"/>
<rect x="484" y="180.0" width="4.5" height="144.0" fill="url(#s484)"/>
<rect x="488" y="182.0" width="4.5" height="142.5" fill="url(#s488)"/>
<rect x="492" y="184.3" width="4.5" height="140.9" fill="url(#s492)"/>
<rect x="496" y="186.5" width="4.5" height="139.2" fill="url(#s496)"/>
<rect x="500" y="188.7" width="4.5" height="137.3" fill="url(#s500)"/>
</g>
<g filter="url(#bl5)">
<polyline points="470,185 490,194.2 500,199.6 511.3,205.8 522.6,211.4 533.9,217.1 545.1,222.7 551.9,228.4 560.9,236.3 570,245.3 576.7,253.2 583.5,262.2 590,275" fill="none" stroke="#d0d0d0" stroke-width="44" stroke-linecap="round"/>
</g>
<g filter="url(#bl5)">
<polygon points="466,238 504,244 516,272 506,298 486,304 474,282" fill="#c6c6c6"/>
</g>
<g filter="url(#bl5)">
<polygon points="496,286 524,278 550,284 556,302 540,318 530,340 516,330 494,312" fill="#222222"/>
<polygon points="557,287 575,290 590,320 597,355 588,372 570,345 560,310" fill="#808080"/>
<polygon points="532,288 560,284 574,298 568,318 546,320" fill="#7c7c7c"/>
</g>
<g filter="url(#bl)">
<polyline points="427,273.1 437.2,274 445.5,280.7 453.8,285.5 464.6,292.6 470.5,298.6 471.7,303.4" fill="none" stroke="#3a3a3a" stroke-width="12"/>

<polyline points="356.4,141.0 367.7,145.0 376.7,148.4 388.0,150.6 400.0,154.1 411.3,159.8 422.6,164.8 433.9,169.3 445.1,173.9 456.4,178.9 467.7,183.5 479.0,188.5 490.3,194.2 500.0,199.6 511.3,205.8 522.6,211.4 533.9,217.1 545.1,222.7 551.9,228.4 560.9,236.3 570.0,245.3 576.7,253.2 583.5,262.2" fill="none" stroke="#c0c0c0" stroke-width="8"/>
<polyline points="516,276 539,272 557,278 568,294 577,321 586,355" fill="none" stroke="#656565" stroke-width="10"/>
<polyline points="583.5,262.2 587.4,269.3 592.1,278.5 596.7,287.8 601.3,297.1 604.1,306.3 606.9,315.6 610.6,324.9 614.2,336.3 615.9,353.2 615.3,362.2" fill="none" stroke="#cccccc" stroke-width="22"/>
<polyline points="615.3,362.2 611.9,371.3 606.3,376.9 599.5,382.6 588.2,386.0 579.2,388.2 572.4,387.0 558.9,386.5 548.4,385.5" fill="none" stroke="#707070" stroke-width="8"/>
<polyline points="548.4,385.5 543.0,380.5 537.7,372.2 531.1,361.6 525.8,349.7 521.8,336.4 519.2,323.2 508.0,313.0 500.0,309.3" fill="none" stroke="#262626" stroke-width="30"/>
<polyline points="440,349 457,332 472,312 490,300" fill="none" stroke="#3e3e3e" stroke-width="18"/>
<polyline points="446,342 460,328 474,310" fill="none" stroke="#686868" stroke-width="3"/>

</g>
<ellipse cx="311" cy="141" rx="3" ry="7" fill="#5a5a5a" transform="rotate(-38 311 141)" filter="url(#bl1)"/>
<polyline points="505,202 522.6,211.4 533.9,217.1 545.1,222.7 551.9,228.4 560.9,236.3 570,245.3 576.7,253.2 583.5,262.2 587.4,269.3 592.1,278.5" fill="none" stroke="#e6e6e6" stroke-width="16" filter="url(#bl)"/>
<g stroke="#202020" stroke-width="1.3" fill="none">
<path d="M544,231 l1,1 M554.2,230.6 l2.4,2.9 M561,242 l5.2,5.2 M572,253 l1,1 M575,256 l3.5,3"/>
</g>
<g filter="url(#bl5)">
<polygon points="538,324 552,314 568,338 574,378 556,380 544,356" fill="#cfcfcf"/>
</g>
</g>
<!--/AST-->
<g id="frames" fill="none" stroke="#0ff" stroke-width="1" shape-rendering="crispEdges">
<polygon points="234.5,55.5 393.5,57.5 374.5,166.5 224.5,162.5"/>
<polygon points="228.5,149.5 377.5,152.5 376.5,267.5 226.5,262.5"/>
<polygon points="230.5,252.5 379.5,252.5 384.5,380.5 228.5,382.5"/>
<polygon points="231.5,358.5 384.5,359.5 383.5,477.5 230.5,476.5"/>
<polygon points="362.5,56.5 522.5,55.5 521.5,180.5 371.5,184.5"/>
<polygon points="368.5,164.5 519.5,163.5 519.5,280.5 368.5,279.5"/>
<polygon points="365.5,259.5 517.5,262.5 519.5,383.5 364.5,378.5"/>
<polygon points="362.5,362.5 517.5,363.5 522.5,492.5 362.5,491.5"/>
<polygon points="497.5,63.5 652.5,63.5 652.5,181.5 498.5,182.5"/>
<polygon points="498.5,163.5 655.5,158.5 656.5,281.5 501.5,284.5"/>
<polygon points="503.5,268.5 656.5,263.5 657.5,385.5 501.5,386.5"/>
<polygon points="504.5,369.5 656.5,365.5 657.5,488.5 498.5,490.5"/>
</g>
</svg>
<div class="t" style="left:6px;top:550px">OPN_337B_KL</div>
<div class="t" style="left:6px;top:564px">3x4 Mosaic in Filter 4</div>
<div class="t" style="left:6px;top:578px">Duration: 20 Minutes</div>
<div class="t" style="left:85px;top:528px">MSI:  2000-337T12:08:30.00 to 2000-337T12:19:52.00 (6/0151169144 to 6/0151169826)</div>
<div class="t" style="left:588px;top:2px">0</div>
<div class="t" style="left:877px;top:2px">1</div>
<div class="t" style="left:647px;top:38px">0.2</div>
<div class="t" style="left:706px;top:38px">0.4</div>
<div class="t" style="left:765px;top:38px">0.6</div>
<div class="t" style="left:824px;top:38px">0.8</div>
<div class="t" style="left:27px;top:511px">5 km</div>
</div></body></html>
